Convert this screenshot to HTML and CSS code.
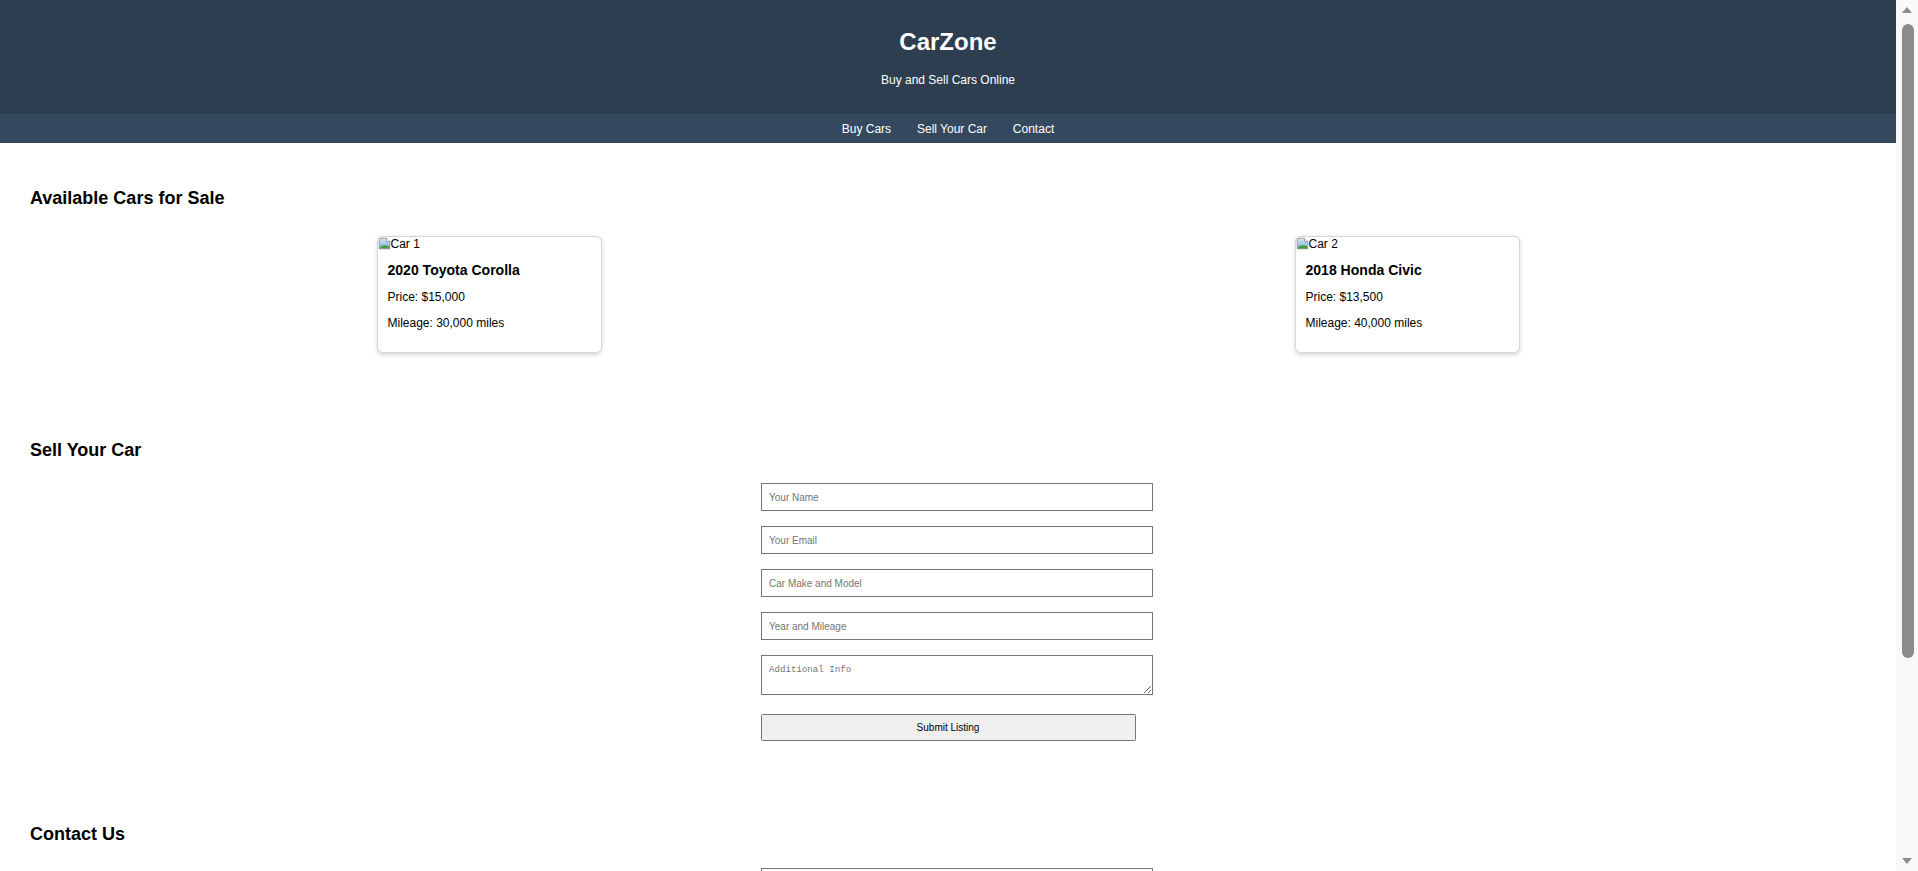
FILE: index.html
```html
<!DOCTYPE html>
<html lang="en">
<head>
<meta charset="utf-8">
<title>CarZone - Buy and Sell Cars Online</title>
<link rel="stylesheet" href="styles.css">
</head>
<body>
<header class="site-header">
  <h1 class="site-title">CarZone</h1>
  <p class="site-tagline">Buy and Sell Cars Online</p>
</header>
<nav class="main-nav">
  <a class="nav-link" href="#buy">Buy Cars</a>
  <a class="nav-link" href="#sell">Sell Your Car</a>
  <a class="nav-link" href="#contact">Contact</a>
</nav>

<section class="section" id="buy">
  <h2 class="section-title">Available Cars for Sale</h2>
  <div class="car-list">
    <div class="car-card">
      <div class="car-photo"><svg class="broken-icon" width="13" height="13" viewBox="0 0 16 16"><defs><linearGradient id="sky1" x1="0" y1="0" x2="0" y2="1"><stop offset="0" stop-color="#d4e6f7"/><stop offset="1" stop-color="#7fb0de"/></linearGradient></defs><path d="M1.5 1.5H10.5L14.5 5.5V14.5H1.5Z" fill="url(#sky1)" stroke="#8f8f8f"/><path d="M2 14C4 9.5 8 9 14 11.5V14Z" fill="#4e9a3e"/><path d="M10.5 1.5V5.5H14.5" fill="#fff" stroke="#8f8f8f"/></svg>Car 1</div>
      <div class="car-info">
        <h3 class="car-name">2020 Toyota Corolla</h3>
        <p class="car-detail">Price: $15,000</p>
        <p class="car-detail">Mileage: 30,000 miles</p>
      </div>
    </div>
    <div class="car-card">
      <div class="car-photo"><svg class="broken-icon" width="13" height="13" viewBox="0 0 16 16"><defs><linearGradient id="sky2" x1="0" y1="0" x2="0" y2="1"><stop offset="0" stop-color="#d4e6f7"/><stop offset="1" stop-color="#7fb0de"/></linearGradient></defs><path d="M1.5 1.5H10.5L14.5 5.5V14.5H1.5Z" fill="url(#sky2)" stroke="#8f8f8f"/><path d="M2 14C4 9.5 8 9 14 11.5V14Z" fill="#4e9a3e"/><path d="M10.5 1.5V5.5H14.5" fill="#fff" stroke="#8f8f8f"/></svg>Car 2</div>
      <div class="car-info">
        <h3 class="car-name">2018 Honda Civic</h3>
        <p class="car-detail">Price: $13,500</p>
        <p class="car-detail">Mileage: 40,000 miles</p>
      </div>
    </div>
  </div>
</section>

<section class="section" id="sell">
  <h2 class="section-title">Sell Your Car</h2>
  <form class="site-form">
    <input class="form-field" type="text" placeholder="Your Name">
    <input class="form-field" type="email" placeholder="Your Email">
    <input class="form-field" type="text" placeholder="Car Make and Model">
    <input class="form-field" type="text" placeholder="Year and Mileage">
    <textarea class="form-area" placeholder="Additional Info"></textarea>
    <button class="form-button" type="button">Submit Listing</button>
  </form>
</section>

<section class="section" id="contact">
  <h2 class="section-title">Contact Us</h2>
  <form class="site-form contact-form">
    <input class="form-field" type="text" placeholder="Your Name">
    <input class="form-field" type="email" placeholder="Your Email">
    <textarea class="form-area" placeholder="Your Message"></textarea>
    <button class="form-button" type="button">Send Message</button>
  </form>
</section>

<footer class="site-footer">
  <p class="footer-text">&copy; 2024 CarZone. All rights reserved.</p>
</footer>

<div class="fake-scrollbar" aria-hidden="true">
  <div class="scroll-arrow scroll-arrow-up"></div>
  <div class="scroll-track"><div class="scroll-thumb"></div></div>
  <div class="scroll-arrow scroll-arrow-down"></div>
</div>
</body>
</html>
```

FILE: styles.css
```css
html {
  background: #ffffff;
}

body {
  margin: 0 22px 0 0;
  font-family: "Liberation Sans", Arial, sans-serif;
  font-size: 12px;
  color: #000000;
  background: #ffffff;
}

/* Scrollbar drawn over the right edge, as in the reference */
.fake-scrollbar {
  position: fixed;
  top: 0;
  right: 0;
  bottom: 0;
  width: 22px;
  background: #f9f9f9;
  display: flex;
  flex-direction: column;
  align-items: center;
}

.scroll-arrow {
  flex: 0 0 17px;
  width: 22px;
  display: flex;
  justify-content: center;
}

.scroll-arrow-up {
  align-items: flex-end;
}

.scroll-arrow-down {
  align-items: flex-start;
}

.scroll-arrow-up::before {
  content: "";
  width: 0;
  height: 0;
  border-left: 5px solid transparent;
  border-right: 5px solid transparent;
  border-bottom: 6px solid #8b8b8b;
  margin-bottom: 4px;
}

.scroll-arrow-down::before {
  content: "";
  width: 0;
  height: 0;
  border-left: 5px solid transparent;
  border-right: 5px solid transparent;
  border-top: 6px solid #8b8b8b;
  margin-top: 4px;
}

.scroll-track {
  flex: 1 1 auto;
  width: 22px;
  display: flex;
  justify-content: center;
  padding-top: 7px;
  box-sizing: border-box;
}

.scroll-thumb {
  width: 12px;
  height: 634px;
  background: #8b8b8b;
  border-radius: 6px;
  margin-left: 1px;
}

/* Header */
.site-header {
  background: #2c3e50;
  color: #ffffff;
  text-align: center;
  padding: 12.2px 0 12px;
}

.site-title {
  font-size: 24px;
  font-weight: bold;
  margin: 16.08px 0;
}

.site-tagline {
  font-size: 12px;
  margin: 16.6px 0 15.1px;
}

/* Nav */
.main-nav {
  background: #34495e;
  text-align: center;
  padding: 8px 0 7px;
  line-height: 14px;
}

.nav-link {
  color: #ffffff;
  text-decoration: none;
  margin: 0 11.25px;
}

/* Sections */
.section {
  padding: 30px;
}

.section-title {
  font-size: 18px;
  font-weight: bold;
  margin: 14.94px 0;
}

/* Car cards */
.car-list {
  display: flex;
  justify-content: space-around;
  flex-wrap: wrap;
}

.car-card {
  box-sizing: border-box;
  width: 225px;
  margin: 12px;
  background: #ffffff;
  border: 1px solid #d6d6d6;
  border-radius: 6px;
  box-shadow: 0 1.5px 4px rgba(0, 0, 0, 0.16);
  overflow: hidden;
}

.car-photo {
  height: 15px;
  line-height: 14px;
  white-space: nowrap;
}

.broken-icon {
  display: inline-block;
  vertical-align: -2px;
}

.car-info {
  padding: 10px;
}

.car-name {
  font-size: 14.04px;
  font-weight: bold;
  margin: 0;
}

.car-detail {
  margin: 12px 0;
}

/* Forms */
.site-form {
  display: flow-root;
  max-width: 375px;
  margin: 0 auto;
}

.contact-form {
  padding-top: 1px;
}

.form-field,
.form-area {
  display: block;
  box-sizing: border-box;
  width: calc(100% + 17px);
  padding: 0 7.5px;
  border: 1px solid #767676;
  border-radius: 0;
  background: #ffffff;
  font-family: "Liberation Sans", Arial, sans-serif;
  font-size: 10px;
  color: #000000;
  outline: none;
}

.form-field {
  height: 27.4px;
  margin: 7.7px 0 15.6px;
}

.form-area {
  height: 40px;
  padding: 7.5px;
  margin: 7.7px 0 18.7px;
  font-family: "Liberation Mono", "DejaVu Sans Mono", monospace;
  font-size: 9.15px;
  resize: both;
}

.form-field::placeholder,
.form-area::placeholder {
  color: #757575;
}

.form-button {
  display: block;
  box-sizing: border-box;
  width: 100%;
  height: 27.3px;
  margin: 0 0 7.5px;
  padding: 0;
  background: #efefef;
  border: 1px solid #767676;
  border-radius: 1.5px;
  font-family: "Liberation Sans", Arial, sans-serif;
  font-size: 10px;
  color: #000000;
}

/* Footer */
.site-footer {
  background: #2c3e50;
  color: #ffffff;
  text-align: center;
  padding: 15px;
}

.footer-text {
  margin: 12px 0;
}
```
